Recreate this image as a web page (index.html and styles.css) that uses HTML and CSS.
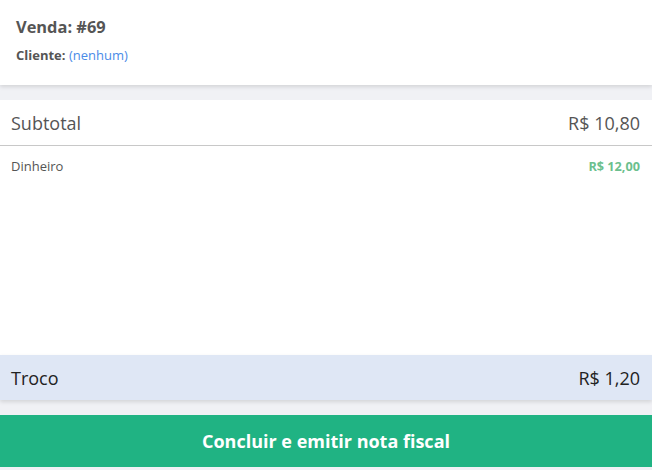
FILE: index.html
```html
<!DOCTYPE html>
<html>
<head>
  <title>Venda #69</title>
<link rel="stylesheet" href="styles.css">
</head>
<body>
  <div class="page">
    <div class="header">
      <h2>Venda: #69</h2>
      <p class="cliente"><b>Cliente:</b> <a href="#">(nenhum)</a></p>
    </div>

    <div class="card">
      <div class="row subtotal">
        <span>Subtotal</span>
        <span>R$ 10,80</span>
      </div>
      <div class="row payment">
        <span>Dinheiro</span>
        <span class="amount">R$ 12,00</span>
      </div>
    </div>

    <div class="row troco">
      <span>Troco</span>
      <span>R$ 1,20</span>
    </div>

    <button class="finish">Concluir e emitir nota fiscal</button>
  </div>
</body>
</html>
```

FILE: styles.css
```css
body {
  margin: 0;
  background: #f0f1f5;
  font-family: 'Open Sans', 'Noto Sans', sans-serif;
  color: #555;
}

.page {
  height: 470px;
  display: flex;
  flex-direction: column;
}

.header {
  background: #fff;
  height: 85px;
  box-sizing: border-box;
  padding: 16px 16px 0 16px;
  box-shadow: 0 2px 4px rgba(0, 0, 0, 0.12);
  position: relative;
  z-index: 1;
}

h2 {
  margin: 0;
  font-size: 16.4px;
  font-weight: 700;
  line-height: 22px;
  color: #555;
}

.cliente {
  margin: 9px 0 0 0;
  font-size: 13px;
  line-height: 17px;
  color: #555;
}

.cliente b {
  font-weight: 700;
}

.cliente a {
  color: #4a8be8;
  text-decoration: none;
}

.card {
  margin-top: 15px;
  background: #fff;
  height: 255px;
}

.row {
  display: flex;
  justify-content: space-between;
  align-items: center;
  padding: 0 12px 0 11px;
}

.subtotal {
  height: 45px;
  border-bottom: 1px solid #c8c8c8;
  font-size: 18px;
  color: #555;
}

.payment {
  height: 40px;
  font-size: 13px;
  color: #555;
}

.payment .amount {
  font-size: 12.7px;
  font-weight: 700;
  color: #6cbf8e;
}

.troco {
  height: 45px;
  background: #dfe7f5;
  font-size: 18px;
  color: #222;
  box-shadow: 0 2px 4px rgba(0, 0, 0, 0.12);
}

.finish {
  margin-top: 15px;
  height: 52px;
  border: none;
  background: #20b383;
  color: #fff;
  font-family: 'Open Sans', 'Noto Sans', sans-serif;
  font-size: 18px;
  font-weight: 700;
  cursor: pointer;
}
```
